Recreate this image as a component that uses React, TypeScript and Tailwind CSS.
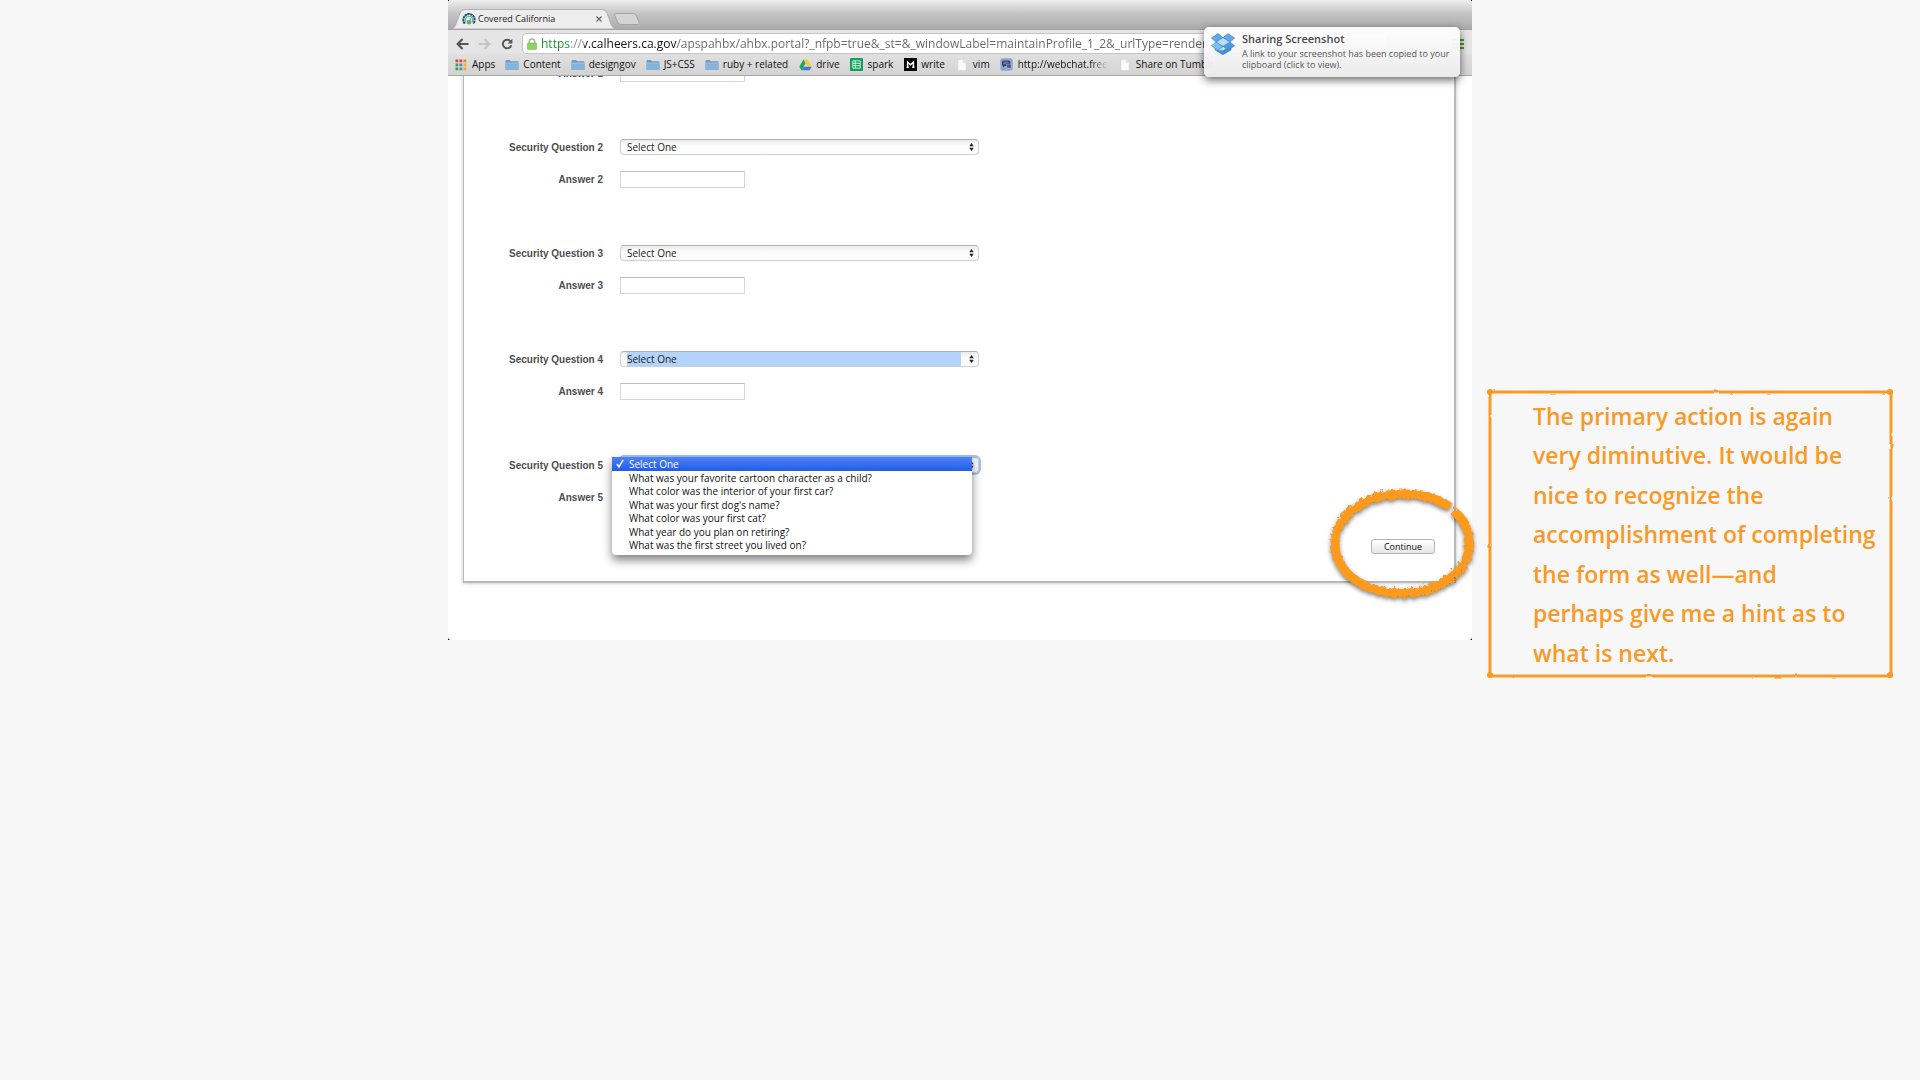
import type { ReactNode } from 'react';

const sans = "font-['Lucida_Grande','Open_Sans',sans-serif]";

function Favicon() {
  return (
    <svg viewBox="0 0 14 14" className="h-3.5 w-3.5 shrink-0" fill="none" aria-hidden="true">
      <path d="M2.8 11.6A5.7 5.7 0 1 1 11.2 11.6" stroke="#1d5a6c" strokeWidth="2" strokeDasharray="2.4 .4" />
      <path d="M4.4 10.6A3.7 3.7 0 1 1 9.6 10.6" stroke="#4fb3b5" strokeWidth="1.2" />
      <path d="M5.6 12V8.4M8.4 12V6.6" stroke="#7bb850" strokeWidth="1.4" />
      <path d="M7 12.4V8" stroke="#1d5a6c" strokeWidth="1" />
    </svg>
  );
}

function AppsIcon() {
  const colors = ['#e0463a', '#e0463a', '#e8803a', '#3f9b57', '#4a7fd6', '#e9b53a', '#3f9b57', '#4fa565', '#e9a53a'];
  return (
    <svg viewBox="0 0 12 12" className="h-3 w-3" aria-hidden="true">
      {colors.map((c, i) => (
        <rect key={i} x={(i % 3) * 4 + 0.5} y={Math.floor(i / 3) * 4 + 0.5} width="2.8" height="2.8" fill={c} />
      ))}
    </svg>
  );
}

function FolderIcon() {
  return (
    <svg viewBox="0 0 14 12" className="h-3 w-3.5" aria-hidden="true">
      <path d="M.5 2.2Q.5 1 1.6 1H5l1 1.3h6.6q.9 0 .9.9v7q0 .8-.8.8H1.3q-.8 0-.8-.8z" fill="#6d9cc7" />
      <path d="M.5 4.2h13v6q0 .8-.8.8H1.3q-.8 0-.8-.8z" fill="#86b3da" />
      <path d="M.5 4.1h13" stroke="#b4d2ec" strokeWidth=".7" />
    </svg>
  );
}

function DriveIcon() {
  return (
    <svg viewBox="0 0 13 12" className="h-3 w-[13px]" aria-hidden="true">
      <path d="M4.4.6h4.2l4.1 7H8.5z" fill="#fbcb2e" />
      <path d="M4.4.6 6.5 4.2 2.4 11.3.3 7.7z" fill="#1fa463" />
      <path d="M4.5 7.7h8.2l-2.1 3.6H2.4z" fill="#3e7be0" />
    </svg>
  );
}

function SparkIcon() {
  return (
    <svg viewBox="0 0 13 13" className="h-[13px] w-[13px]" aria-hidden="true">
      <rect width="13" height="13" rx="1" fill="#12a05c" />
      <path d="M2.8 2.8h7.4v7.4H2.8zM2.8 5.3h7.4M2.8 7.7h7.4M5.2 2.8v7.4" fill="none" stroke="#dff5e9" strokeWidth=".9" />
    </svg>
  );
}

function WriteIcon() {
  return (
    <svg viewBox="0 0 13 13" className="h-[13px] w-[13px]" aria-hidden="true">
      <rect width="13" height="13" fill="#000" />
      <path d="M3.600 9.300V4L6.500 6.800 9.400 4V9.300M2.600 9.200h2.200M8.200 9.200h2.300" fill="none" stroke="#fff" strokeWidth="1.500" />
    </svg>
  );
}

function PageIcon() {
  return (
    <svg viewBox="0 0 10 12" className="h-3 w-2.5" aria-hidden="true">
      <path d="M.8.6h5.4L9.2 3.6v7.8H.8z" fill="#fbfbfb" stroke="#cfcfcf" strokeWidth=".6" />
      <path d="M6.2.6v3h3" fill="#e6e6e6" stroke="#cfcfcf" strokeWidth=".5" />
    </svg>
  );
}

function ChatIcon() {
  return (
    <svg viewBox="0 0 13 13" className="h-[13px] w-[13px]" aria-hidden="true">
      <rect x=".3" y=".3" width="12.4" height="12.4" rx="2.5" fill="#8fa5cd" />
      <path d="M2 4q0-1.600 1.600-1.600h5Q10.400 2.400 10.400 4v2.200Q10.400 8 8.600 8H5L3 9.600V8Q2 7.800 2 6.500z" fill="#2e436f" />
      <path d="M6.500 6h3.500q1.200 0 1.200 1.200v1.600q0 1-.8 1.200v1.400L9 10H6.800z" fill="#40578a" stroke="#c3cfe6" strokeWidth=".5" />
      <path d="M3.600 4.200h4.800M3.600 5.700h2.600" stroke="#b9c8e4" strokeWidth=".6" />
    </svg>
  );
}

function BoxLogo() {
  return (
    <svg viewBox="0 0 24 22" className="h-[22px] w-6 shrink-0" stroke="#2a6fb5" strokeWidth=".5" strokeLinejoin="round" aria-hidden="true">
      <path d="M4 12.500 12 17.500 20 12.500V17L12 21.700 4 17z" fill="#3f92dc" />
      <path d="M12 8.800 19.400 13.200 12 17.600 4.600 13.200z" fill="#d3ebfb" />
      <path d="M12 17.500V9L4.600 13.200V17z" fill="#a9d5f6" stroke="none" />
      <path d="M7 .6 12 4.700 5 9 .4 5.100z" fill="#5cabe9" />
      <path d="M17 .6 23.600 5.100 19 9 12 4.700z" fill="#5cabe9" />
      <path d="M5 9 12 13.200 7 17.200 .4 12.800z" fill="#7cc0f2" />
      <path d="M19 9 23.600 12.800 17 17.200 12 13.200z" fill="#4a9be0" />
      <path d="M5 9 12 4.700 19 9 12 13.200z" fill="#b9def9" />
    </svg>
  );
}

function Bookmark({ icon, children }: { icon: ReactNode; children: ReactNode }) {
  return (
    <a href="#" className="flex shrink-0 items-center gap-1 text-[#111]">
      <span className="flex w-3.5 justify-center">{icon}</span>
      {children}
    </a>
  );
}

function TabStrip() {
  return (
    <div className="flex h-[30px] items-end overflow-hidden rounded-t-[3px] border-b border-[#a3a3a3] bg-linear-to-b from-[#eeeeee] via-[#c2c2c2] to-[#ababab]">
      <div className="relative ml-1 flex h-5 w-[166px] items-center pl-2.5">
        <svg viewBox="0 0 166 20" className="absolute inset-0 h-5 w-[166px]" aria-hidden="true">
          <path d="M0 20Q2.500 19 4 15L8 4Q9.500 .5 13 .5H150Q153.500 .5 155 4L159 15Q160.500 19 163 20z" fill="#ededed" stroke="#a6a6a6" strokeWidth=".8" />
        </svg>
        <div className="relative flex w-full items-center gap-0.5 text-[9px] font-medium text-[#1c1c1c]">
          <Favicon />
          <span>Covered California</span>
          <button aria-label="Close tab" className="mr-4 ml-auto">
            <svg viewBox="0 0 6 6" className="h-1.5 w-1.5" stroke="#666" strokeWidth="1.200" aria-hidden="true">
              <path d="M.5.5l5 5M5.500.5l-5 5" />
            </svg>
          </button>
        </div>
      </div>
      <button aria-label="New tab" className="mb-1">
        <svg viewBox="0 0 26 12" className="-ml-1 h-3 w-[26px]" aria-hidden="true">
          <path d="M1.500.5H19q2.500 0 3.500 2.500L25 9q1 2.500-1 2.500H7q-2.500 0-3.500-2.500L1 3Q0 .5 1.500.5z" fill="#d4d4d4" stroke="#9c9c9c" strokeWidth=".8" />
        </svg>
      </button>
    </div>
  );
}

function Toolbar() {
  return (
    <div className="flex h-6 items-center bg-[#e5e5e5] pt-[3px] pr-2 pl-2">
      <button aria-label="Back" className="w-[22px]">
        <svg viewBox="0 0 13 12" className="h-3 w-[13px]" fill="none" stroke="#555" strokeWidth="2.200" aria-hidden="true">
          <path d="M6.500 1 1.700 6l4.800 5M2 6h10.500" />
        </svg>
      </button>
      <button aria-label="Forward" className="w-[22px]">
        <svg viewBox="0 0 13 12" className="h-3 w-[13px]" fill="none" stroke="#c4c4c4" strokeWidth="2.200" aria-hidden="true">
          <path d="M6.500 1l4.800 5-4.800 5M11 6H.5" />
        </svg>
      </button>
      <button aria-label="Reload" className="w-[22px] pl-px">
        <svg viewBox="0 0 12 12" className="h-3 w-3" aria-hidden="true">
          <path d="M9.400 3.200A4.300 4.300 0 1 0 10.300 7.200" fill="none" stroke="#555" strokeWidth="1.900" />
          <path d="M11.400.8v4.800H6.600z" fill="#555" />
        </svg>
      </button>
      <div className="mr-16 flex h-[21px] min-w-0 flex-1 items-center gap-1 rounded-sm border border-[#c4c4c4] bg-white pl-1">
        <svg viewBox="0 0 10 12" className="h-3 w-2.5 shrink-0" aria-hidden="true">
          <path d="M2.300 6V3.600a2.700 2.700 0 0 1 5.400 0V6" fill="none" stroke="#a9b3a4" strokeWidth="1.500" />
          <rect x=".5" y="5" width="9" height="6.600" rx=".8" fill="#8fd45e" stroke="#6fb545" strokeWidth=".6" />
        </svg>
        <input
          aria-label="Address"
          readOnly
          className="min-w-0 flex-1 bg-[linear-gradient(90deg,#0a9a1c_0_29px,#888_29px_43px,#111_43px_136px,#666_136px)] bg-clip-text text-[12px] text-transparent outline-none"
          value="https://v.calheers.ca.gov/apspahbx/ahbx.portal?_nfpb=true&_st=&_windowLabel=maintainProfile_1_2&_urlType=render"
        />
      </div>
      <button aria-label="Menu" className="flex flex-col gap-0.5">
        <span className="h-0.5 w-3 bg-[#3fa716]" />
        <span className="h-0.5 w-3 bg-[#3fa716]" />
        <span className="h-0.5 w-3 bg-[#3fa716]" />
      </button>
    </div>
  );
}

function Bookmarks() {
  return (
    <nav className="flex h-[22px] items-center gap-2.5 overflow-hidden border-b border-[#a8a8a8] bg-linear-to-b from-[#e0e0e0] to-[#d3d3d3] pl-1.5 text-[10px] font-medium whitespace-nowrap">
      <Bookmark icon={<AppsIcon />}>Apps</Bookmark>
      <Bookmark icon={<FolderIcon />}>Content</Bookmark>
      <Bookmark icon={<FolderIcon />}>designgov</Bookmark>
      <Bookmark icon={<FolderIcon />}>JS+CSS</Bookmark>
      <Bookmark icon={<FolderIcon />}>ruby + related</Bookmark>
      <Bookmark icon={<DriveIcon />}>drive</Bookmark>
      <Bookmark icon={<SparkIcon />}>spark</Bookmark>
      <Bookmark icon={<WriteIcon />}>write</Bookmark>
      <Bookmark icon={<PageIcon />}>vim</Bookmark>
      <Bookmark icon={<ChatIcon />}>
        <span className="mask-r-from-80%">http://webchat.free</span>
      </Bookmark>
      <Bookmark icon={<PageIcon />}>Share on Tumblr</Bookmark>
    </nav>
  );
}

function Notification() {
  return (
    <aside className="absolute top-[27px] right-3 z-20 flex w-64 gap-[7px] rounded-[5px] bg-linear-to-b from-white/95 to-[#ececec]/95 pt-1.5 pb-[7px] pl-[7px] text-[#555] shadow-[0_3px_9px_rgba(0,0,0,0.6)]">
      <BoxLogo />
      <div className="whitespace-nowrap">
        <h2 className="text-[11px] leading-3 font-semibold text-[#4a4a4a]">Sharing Screenshot</h2>
        <p className="mt-[3px] text-[9px] leading-[11px]">
          A link to your screenshot has been copied to your
          <br />
          clipboard (click to view).
        </p>
      </div>
    </aside>
  );
}

function Label({ id, children }: { id: string; children: ReactNode }) {
  return (
    <label htmlFor={id} className="w-[139px] shrink-0 text-right font-['Liberation_Sans',sans-serif] text-[10px] font-bold text-[#4d4d4d]">
      {children}
    </label>
  );
}

function AnswerRow({ n }: { n: number }) {
  return (
    <div className="flex items-center gap-[17px]">
      <Label id={`answer${n}`}>Answer {n}</Label>
      <input
        id={`answer${n}`}
        type="text"
        className="h-[17px] w-[125px] border border-t-[#bdbdbd] border-r-[#d6d6d6] border-b-[#d6d6d6] border-l-[#d6d6d6] bg-white px-1 text-[10px] outline-none"
      />
    </div>
  );
}

function QuestionRow({ n, marked, open }: { n: number; marked?: boolean; open?: boolean }) {
  return (
    <div className="relative flex items-center gap-[17px]">
      <Label id={`question${n}`}>Security Question {n}</Label>
      <div
        className={`relative flex h-4 w-[359px] rounded-[4px] border border-t-[#b0b0b0] border-r-[#cfcfcf] border-b-[#cfcfcf] border-l-[#cfcfcf] bg-linear-to-b from-[#ebebeb] to-[#fcfcfc] to-40% ${open ? 'ring-2 ring-[#9cc6f2]' : ''}`}
      >
        <select
          id={`question${n}`}
          className={`w-full appearance-none pr-[17px] pl-1.5 text-[10px] leading-[14px] text-[#222] outline-none ${marked ? 'bg-[#b3d3fb] bg-clip-content' : ''}`}
        >
          <option>Select One</option>
        </select>
        <svg viewBox="0 0 5 8" className="pointer-events-none absolute top-[3px] right-1 h-2 w-[5px]" fill="#222" aria-hidden="true">
          <path d="M2.500 0 4.700 3.200H.3zM2.500 8 .3 4.800h4.400z" />
        </svg>
      </div>
      {open && <OptionList />}
    </div>
  );
}

const options = [
  'What was your favorite cartoon character as a child?',
  'What color was the interior of your first car?',
  "What was your first dog's name?",
  'What color was your first cat?',
  'What year do you plan on retiring?',
  'What was the first street you lived on?',
];

function OptionList() {
  return (
    <ul
      role="listbox"
      aria-label="Security Question 5 options"
      className="absolute top-0 left-[148px] z-10 grid h-[98px] w-[360px] grid-rows-7 rounded-b-[4px] bg-white pb-[3px] text-[10px] leading-[14px] font-medium text-[#111] shadow-[0_5px_10px_rgba(0,0,0,0.5)]"
    >
      <li role="option" aria-selected="true" className="flex items-center bg-linear-to-b from-[#5080f3] to-[#1d5ceb] pl-1 text-white">
        <svg viewBox="0 0 8 9" className="mr-[5px] h-[9px] w-2" fill="none" stroke="#fff" strokeWidth="1.500" aria-hidden="true">
          <path d="M1 5 3 8 7 .8" />
        </svg>
        Select One
      </li>
      {options.map((o) => (
        <li key={o} role="option" aria-selected="false" className="pl-[17px]">
          {o}
        </li>
      ))}
    </ul>
  );
}

function CircleMark() {
  return (
    <svg
      viewBox="0 0 160 130"
      className="pointer-events-none absolute top-1/2 left-1/2 z-20 h-[130px] w-40 -translate-1/2 drop-shadow-[0_2px_2px_rgba(0,0,0,0.5)]"
      fill="none"
      aria-hidden="true"
    >
      <defs>
        <filter id="rough" x="-10%" y="-10%" width="120%" height="120%">
          <feTurbulence type="fractalNoise" baseFrequency="0.3" numOctaves="2" seed="4" result="noise" />
          <feDisplacementMap in="SourceGraphic" in2="noise" scale="7" />
        </filter>
      </defs>
      <g filter="url(#rough)" stroke="#fd9a1e" strokeWidth="9">
        <path d="M130.500 29C146 41 148 58 145.500 70C140 93 112 111.500 79 111.500C41 111.500 12 90 12 62C12 34 42 12 79 12C98 12 114 16.500 127 25" />
      </g>
    </svg>
  );
}

const noteLines = [
  'The primary action is again',
  'very diminutive. It would be',
  'nice to recognize the',
  'accomplishment of completing',
  'the form as well—and',
  'perhaps give me a hint as to',
  'what is next.',
];

function Note() {
  return (
    <div className="relative mt-[391px] mr-[30px] ml-[17px] h-[284px] pt-[5px] pl-11">
      <svg className="absolute inset-0 h-full w-full overflow-visible" aria-hidden="true">
        <defs>
          <filter id="wobble" x="-5%" y="-5%" width="110%" height="110%">
            <feTurbulence type="fractalNoise" baseFrequency="0.06" numOctaves="2" seed="7" result="noise" />
            <feDisplacementMap in="SourceGraphic" in2="noise" scale="2" />
          </filter>
        </defs>
        <g filter="url(#wobble)" fill="#f79a28">
          <rect x="1" y="1" width="100%" height="100%" fill="none" stroke="#f79a28" strokeWidth="3" />
          <circle cx="1" cy="1" r="3" />
          <circle cx="100%" cy="1" r="3" />
          <circle cx="1" cy="100%" r="3" />
          <circle cx="100%" cy="100%" r="3" />
        </g>
      </svg>
      <p className="relative grid h-[277px] grid-rows-7 items-center font-['Comic_Sans_MS','Open_Sans',sans-serif] text-[23px] font-semibold whitespace-nowrap text-[#f79a28]">
        {noteLines.map((line) => (
          <span key={line}>{line}</span>
        ))}
      </p>
    </div>
  );
}

export default function App() {
  return (
    <main className={`grid min-h-screen grid-cols-[448fr_1024fr_448fr] items-start bg-[#f7f7f7] ${sans}`}>
      <div />
      <div className="relative min-w-0 bg-black">
        <div className="rounded-[3px] bg-white pb-[57px]">
          <header className="relative z-10">
            <TabStrip />
            <Toolbar />
            <Bookmarks />
          </header>
          <Notification />
          <form className="mr-4 ml-[15px] border-r-2 border-b-2 border-l border-[#b9b9b9] pb-[27px] shadow-[0_0_4px_rgba(0,0,0,0.25)]">
            <div className="-mt-[11px]">
              <AnswerRow n={1} />
            </div>
            {[2, 3, 4, 5].map((n) => (
              <div key={n} className="mt-[57px] flex flex-col gap-4">
                <QuestionRow n={n} marked={n === 4} open={n === 5} />
                <AnswerRow n={n} />
              </div>
            ))}
            <div className="mt-[33px] mr-[19px] flex justify-end">
              <div className="relative">
                <button
                  type="button"
                  className="block h-[15px] w-16 rounded-[3px] border border-[#b5b5b5] bg-linear-to-b from-white to-[#e6e6e6] text-center text-[9px] leading-[13px] font-medium text-[#111]"
                >
                  Continue
                </button>
                <CircleMark />
              </div>
            </div>
          </form>
        </div>
      </div>
      <Note />
    </main>
  );
}
